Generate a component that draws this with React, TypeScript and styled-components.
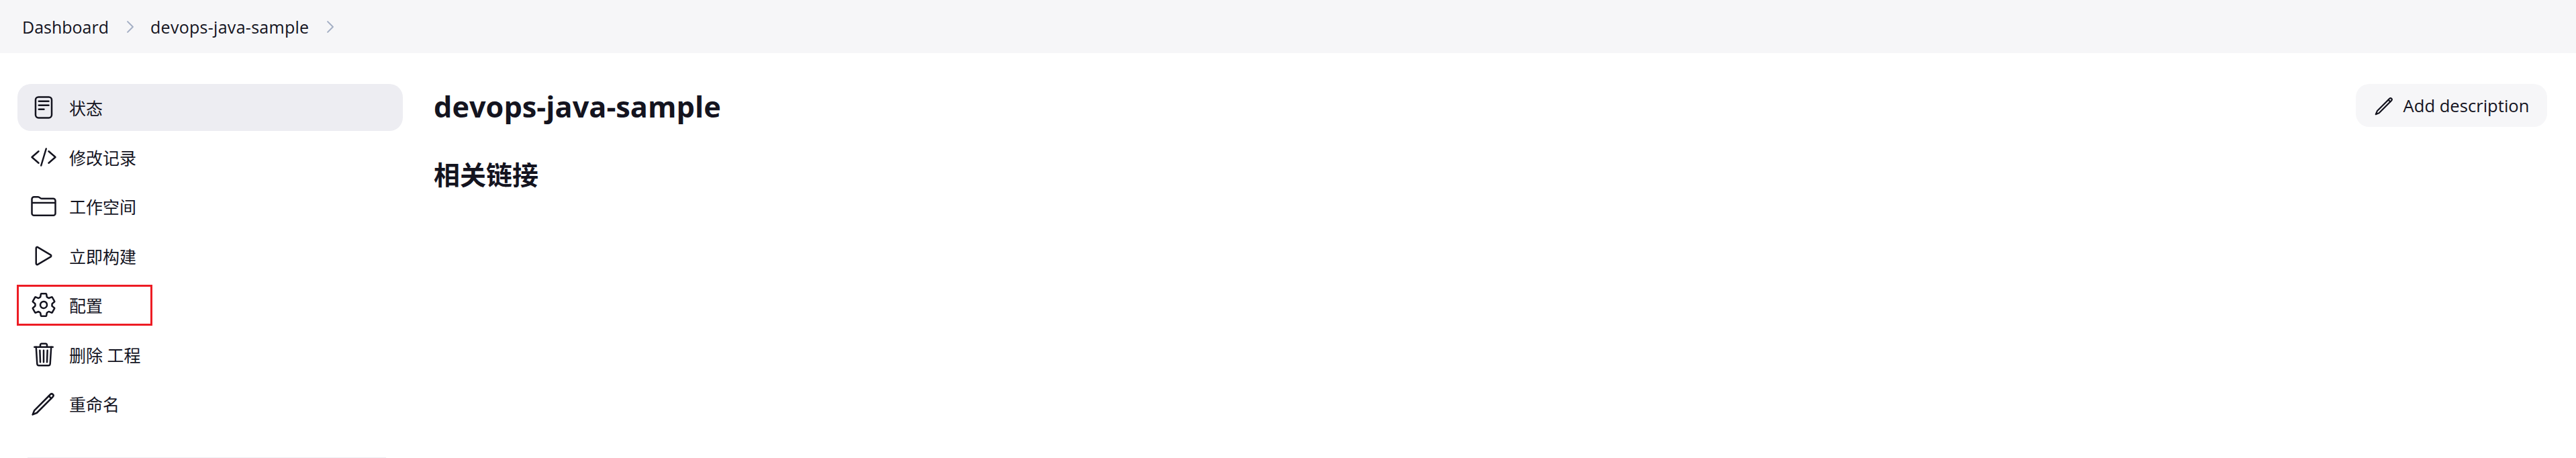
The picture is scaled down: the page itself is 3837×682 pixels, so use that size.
import React from "react"
import styled, { createGlobalStyle } from "styled-components"
import {
  IoCodeSlashOutline,
  IoFolderOutline,
  IoPlayOutline,
  IoSettingsOutline,
  IoTrashOutline,
  IoChevronForward,
} from "react-icons/io5"

const GlobalStyle = createGlobalStyle`
  html, body {
    margin: 0;
    padding: 0;
    background: #fff;
    color: #14141f;
    font-family: "Open Sans", "Noto Sans CJK SC", sans-serif;
  }
`

const Page = styled.div`
  width: 3837px;
  height: 682px;
  overflow: hidden;
`

const Breadcrumbs = styled.nav`
  height: 79px;
  background: #f6f6f8;
  display: flex;
  align-items: center;
  padding-left: 33px;
  font-size: 25px;
`

const Crumb = styled.span<{ $tracking?: number }>`
  color: #14141f;
  letter-spacing: ${(p) => p.$tracking ?? 0}px;
`

const CrumbArrow = styled.span`
  display: flex;
  color: #a3aec4;
  font-size: 28px;
  margin: 0 16px 0 18px;

  svg path {
    stroke-width: 36px;
  }
`

const Body = styled.div`
  display: flex;
  padding: 46px 43px 0 26px;
`

const Sidebar = styled.aside`
  width: 574px;
  flex: none;
  display: flex;
  flex-direction: column;
`

const Task = styled.div<{ $active?: boolean }>`
  position: relative;
  height: 70px;
  margin-bottom: 3.5px;
  display: flex;
  align-items: center;
  border-radius: 20px;
  background: ${(p) => (p.$active ? "#ededf2" : "transparent")};
  font-size: 25px;
`

const TaskIcon = styled.span`
  width: 77px;
  flex: none;
  display: flex;
  justify-content: center;
  font-size: 40px;

  svg path,
  svg rect,
  svg circle {
    stroke-width: 32px;
  }
`

const Highlight = styled.div`
  position: absolute;
  left: -1px;
  top: 5px;
  width: 196px;
  height: 55px;
  border: 3px solid #ed1c24;
`

const Divider = styled.div`
  height: 2px;
  margin: 41px 25px 0 15px;
  background: #ededf2;
`

const Main = styled.main`
  flex: 1;
  padding-left: 46px;
`

const TitleRow = styled.div`
  display: flex;
  align-items: center;
  justify-content: space-between;
  height: 64px;
`

const Title = styled.h1`
  margin: 0;
  padding-top: 3px;
  font-size: 43.3px;
  font-weight: 700;
`

const AddButton = styled.button`
  width: 285px;
  height: 64px;
  display: flex;
  align-items: center;
  justify-content: center;
  gap: 13px;
  border: 0;
  border-radius: 20px;
  background: #f6f6f8;
  color: #14141f;
  font: inherit;
  font-size: 25.6px;

  svg {
    width: 31px;
    height: 31px;
  }
`

const LinksHeading = styled.h2`
  margin: 41px 0 0;
  font-size: 39px;
  font-weight: 700;
`

function StatusIcon() {
  return (
    <svg width="1em" height="1em" viewBox="0 0 512 512" fill="none" stroke="currentColor" strokeWidth="32" strokeLinecap="round">
      <rect x="102" y="57" width="308" height="397" rx="56" />
      <path d="M164 137h188M164 214h188M164 290h98" />
    </svg>
  )
}

function PencilIcon() {
  return (
    <svg width="1em" height="1em" viewBox="0 0 512 512" fill="none" stroke="currentColor" strokeWidth="36" strokeLinecap="round" strokeLinejoin="round">
      <path d="M46 466l34-81L385 80a33 33 0 0 1 47 47L127 432z" />
      <path d="M355 110l47 47" />
    </svg>
  )
}

const tasks = [
  { label: "状态", icon: <StatusIcon />, active: true },
  { label: "修改记录", icon: <IoCodeSlashOutline /> },
  { label: "工作空间", icon: <IoFolderOutline /> },
  { label: "立即构建", icon: <IoPlayOutline /> },
  { label: "配置", icon: <IoSettingsOutline />, marked: true },
  { label: "删除 工程", icon: <IoTrashOutline /> },
  { label: "重命名", icon: <PencilIcon /> },
]

export default function App() {
  return (
    <Page>
      <GlobalStyle />
      <Breadcrumbs>
        <Crumb>Dashboard</Crumb>
        <CrumbArrow>
          <IoChevronForward />
        </CrumbArrow>
        <Crumb $tracking={0.28}>devops-java-sample</Crumb>
        <CrumbArrow>
          <IoChevronForward />
        </CrumbArrow>
      </Breadcrumbs>
      <Body>
        <Sidebar>
          {tasks.map((t) => (
            <Task key={t.label} $active={t.active}>
              <TaskIcon>{t.icon}</TaskIcon>
              {t.label}
              {t.marked && <Highlight />}
            </Task>
          ))}
          <Divider />
        </Sidebar>
        <Main>
          <TitleRow>
            <Title>devops-java-sample</Title>
            <AddButton>
              <PencilIcon />
              Add description
            </AddButton>
          </TitleRow>
          <LinksHeading>相关链接</LinksHeading>
        </Main>
      </Body>
    </Page>
  )
}
